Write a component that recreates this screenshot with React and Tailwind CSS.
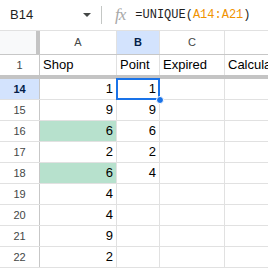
import React from "react";

const font = { fontFamily: '"Liberation Sans", Arial, sans-serif' };

const rows = [
  { n: 14, a: "1", b: "1", sel: true },
  { n: 15, a: "9", b: "9" },
  { n: 16, a: "6", b: "6", green: true },
  { n: 17, a: "2", b: "2" },
  { n: 18, a: "6", b: "4", green: true },
  { n: 19, a: "4", b: "" },
  { n: 20, a: "4", b: "" },
  { n: 21, a: "9", b: "" },
  { n: 22, a: "2", b: "" },
];

function Row({ r }) {
  return (
    <div className="flex h-[21px] box-border border-b border-[#e1e1e1]">
      <div
        className={`w-[40px] shrink-0 box-border border-r border-[#c7c7c7] flex items-center justify-center text-[11px] ${
          r.sel ? "bg-[#d3e3fd] text-[#041e49] font-bold" : "bg-white text-[#444746]"
        }`}
      >
        {r.n}
      </div>
      <div
        className={`w-[77px] shrink-0 box-border border-r border-[#e1e1e1] flex items-end justify-end pr-[3px] pb-[1px] text-[13px] text-black ${
          r.green ? "bg-[#b7e1cd]" : "bg-white"
        }`}
      >
        {r.a}
      </div>
      <div className="relative w-[43px] shrink-0 box-border border-r border-[#e1e1e1] flex items-end justify-end pr-[3px] pb-[1px] text-[13px] text-black">
        {r.b}
        {r.sel && (
          <>
            <div className="absolute left-[-1px] top-[-1px] w-[44px] h-[22px] border-2 border-[#1a73e8]" />
            <div className="absolute right-[-5px] bottom-[-5px] w-[8px] h-[8px] rounded-full bg-[#1a73e8] border border-white z-10" />
          </>
        )}
      </div>
      <div className="w-[65px] shrink-0 box-border border-r border-[#e1e1e1]" />
      <div className="flex-1" />
    </div>
  );
}

export default function App() {
  return (
    <div className="w-[268px] h-[269px] overflow-hidden bg-white" style={font}>
      {/* formula bar */}
      <div className="h-[31px] box-border border-b border-[#e1e1e1] flex items-center">
        <div className="w-[80px] pl-[10px] text-[13px] text-[#1f1f1f]">B14</div>
        <svg width="8" height="4" viewBox="0 0 8 4" className="ml-[3px]">
          <path d="M0 0 L8 0 L4 4 Z" fill="#444746" />
        </svg>
        <div className="ml-[10px] w-px h-[18px] bg-[#c4c7c5]" />
        <div
          className="ml-[13px] text-[17px] italic text-[#a8a8a8] tracking-[-1px]"
          style={{ fontFamily: '"Liberation Serif", serif' }}
        >
          fx
        </div>
        <div
          className="ml-[10px] text-[12px] text-[#1f1f1f]"
          style={{ fontFamily: '"Liberation Mono", "DejaVu Sans Mono", monospace' }}
        >
          =UNIQUE(<span className="text-[#f09300]">A14:A21</span>)
        </div>
      </div>

      {/* column headers */}
      <div className="flex h-[24px] box-border border-b border-[#c7c7c7] text-[11px]">
        <div className="w-[40px] shrink-0 bg-[#f8f9fa] flex justify-end">
          <div className="w-[4px] h-full bg-[#c4c4c4]" />
        </div>
        <div className="w-[77px] shrink-0 box-border border-r border-[#e1e1e1] flex items-center justify-center text-[#444746]">
          A
        </div>
        <div className="w-[43px] shrink-0 box-border border-r border-[#e1e1e1] bg-[#d3e3fd] flex items-center justify-center text-[#041e49] font-bold">
          B
        </div>
        <div className="w-[65px] shrink-0 box-border border-r border-[#e1e1e1] flex items-center justify-center text-[#444746]">
          C
        </div>
        <div className="flex-1" />
      </div>

      {/* row 1 */}
      <div className="flex h-[20px]">
        <div className="w-[40px] shrink-0 box-border border-r border-[#c7c7c7] flex items-center justify-center text-[11px] text-[#444746]">
          1
        </div>
        <div className="w-[77px] shrink-0 box-border border-r border-[#e1e1e1] flex items-end pl-[3px] pb-[1px] text-[13px] text-black">
          Shop
        </div>
        <div className="w-[43px] shrink-0 box-border border-r border-[#e1e1e1] flex items-end pl-[3px] pb-[1px] text-[13px] text-black">
          Point
        </div>
        <div className="w-[65px] shrink-0 box-border border-r border-[#e1e1e1] flex items-end pl-[3px] pb-[1px] text-[13px] text-black">
          Expired
        </div>
        <div className="flex-1 flex items-end pl-[3px] pb-[1px] text-[13px] text-black whitespace-nowrap overflow-hidden">
          Calculated
        </div>
      </div>
      {/* freeze bar */}
      <div className="h-[4px] bg-[#c4c4c4]" />

      {rows.map((r) => (
        <Row key={r.n} r={r} />
      ))}
    </div>
  );
}
